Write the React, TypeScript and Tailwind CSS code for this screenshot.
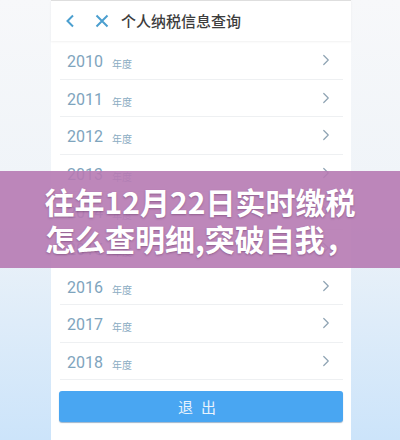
import { ChevronRight } from 'lucide-react';

const years = [2010, 2011, 2012, 2013, 2014, 2015, 2016, 2017, 2018];

const cjk = '"Noto Sans CJK SC", "Noto Sans", sans-serif';

export default function App() {
  return (
    <div
      className="relative h-[440px] w-[400px] overflow-hidden bg-gradient-to-b from-[#f7f8fa] via-[#eef3f8] to-[#cce4fa]"
      style={{ fontFamily: cjk }}
    >
      <div className="ml-[51px] flex h-full w-[300px] flex-col bg-white">
        <div className="flex h-[41px] items-center border-t border-[#dedede] pl-[14px] shadow-[0_1px_2px_rgba(0,0,0,0.06)]">
          <svg width="10" height="14" viewBox="0 0 10 14" className="text-[#4b9fcf]">
            <path d="M8 1.5 2.5 7 8 12.5" fill="none" stroke="currentColor" strokeWidth="2" />
          </svg>
          <svg width="14" height="14" viewBox="0 0 14 14" className="ml-[20px] text-[#4b9fcf]">
            <path d="M1.5 1.5 12.5 12.5M12.5 1.5 1.5 12.5" fill="none" stroke="currentColor" strokeWidth="2" />
          </svg>
          <span className="ml-[12px] text-[15px] font-medium text-[#3d3d3d]">个人纳税信息查询</span>
        </div>

        <div className="mt-px">
          {years.map((year) => (
            <div
              key={year}
              className="mx-[9px] mr-[8px] flex h-[37.6px] items-center border-b border-[#eef0f2] pl-[7px] pr-[8px] pt-[4px]"
            >
              <span className="text-[16px] text-[#7ea4bd]" style={{ fontFamily: 'Roboto, sans-serif' }}>
                {year}
              </span>
              <span className="ml-[9px] mt-[3px] text-[10px] text-[#8aabc2]">年度</span>
              <ChevronRight size={18} strokeWidth={1.6} className="-mt-[4px] ml-auto text-[#8ea3b3]" />
            </div>
          ))}
        </div>

        <button
          type="button"
          className="mx-[8px] mt-[11px] h-[31px] rounded-[3px] bg-[#49a6f2] text-[15px] tracking-[8px] text-[#e8f3fd] shadow-[0_1px_1px_rgba(40,90,140,0.45)]"
        >
          退出
        </button>
      </div>

      <div className="absolute left-0 top-[171px] flex h-[97px] w-full flex-col items-center justify-center bg-[#b67ab3]/[0.9]">
        <p className="text-[30px] font-bold leading-[37px] text-white [text-shadow:0_1px_2px_rgba(60,20,60,0.35)]">
          往年12月22日实时缴税
        </p>
        <p className="text-[30px] font-bold leading-[37px] text-white [text-shadow:0_1px_2px_rgba(60,20,60,0.35)]">
          怎么查明细,突破自我，
        </p>
      </div>
    </div>
  );
}
